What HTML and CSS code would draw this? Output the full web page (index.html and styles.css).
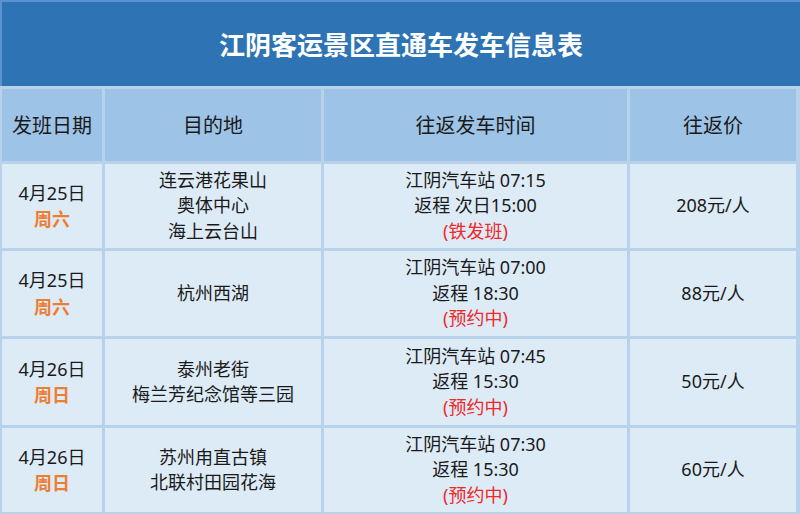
FILE: index.html
```html
<!DOCTYPE html>
<html lang="zh-CN">
<head>
<meta charset="utf-8">
<title>江阴客运景区直通车发车信息表</title>
<link rel="stylesheet" href="styles.css">
</head>
<body>
<div class="sheet">
  <div class="title">江阴客运景区直通车发车信息表</div>
  <div class="grid">
    <div class="cell head">发班日期</div>
    <div class="cell head">目的地</div>
    <div class="cell head">往返发车时间</div>
    <div class="cell head">往返价</div>

    <div class="cell"><span>4月25日</span><span class="wd">周六</span></div>
    <div class="cell"><span>连云港花果山</span><span>奥体中心</span><span>海上云台山</span></div>
    <div class="cell"><span>江阴汽车站 07:15</span><span>返程 次日15:00</span><span class="st">(铁发班)</span></div>
    <div class="cell">208元/人</div>

    <div class="cell"><span>4月25日</span><span class="wd">周六</span></div>
    <div class="cell">杭州西湖</div>
    <div class="cell"><span>江阴汽车站 07:00</span><span>返程 18:30</span><span class="st">(预约中)</span></div>
    <div class="cell">88元/人</div>

    <div class="cell"><span>4月26日</span><span class="wd">周日</span></div>
    <div class="cell"><span>泰州老街</span><span>梅兰芳纪念馆等三园</span></div>
    <div class="cell"><span>江阴汽车站 07:45</span><span>返程 15:30</span><span class="st">(预约中)</span></div>
    <div class="cell">50元/人</div>

    <div class="cell"><span>4月26日</span><span class="wd">周日</span></div>
    <div class="cell"><span>苏州甪直古镇</span><span>北联村田园花海</span></div>
    <div class="cell"><span>江阴汽车站 07:30</span><span>返程 15:30</span><span class="st">(预约中)</span></div>
    <div class="cell">60元/人</div>
  </div>
</div>
</body>
</html>
```

FILE: styles.css
```css
html, body {
  margin: 0;
  padding: 0;
  background: #ffffff;
}
.sheet {
  width: 800px;
  height: 514px;
  overflow: hidden;
  font-family: "Noto Sans", "Noto Sans CJK SC", sans-serif;
  color: #1a1a1a;
}
.title {
  box-sizing: border-box;
  height: 86px;
  border-top: 2px solid #5a93cf;
  border-left: 2px solid #5a93cf;
  background: #2e74b5;
  color: #ffffff;
  font-family: "Noto Sans CJK SC", sans-serif;
  font-weight: 700;
  font-size: 26px;
  display: flex;
  align-items: center;
  justify-content: center;
  padding-bottom: 2px;
}
.grid {
  display: grid;
  grid-template-columns: 100px 216px 303px 166px;
  grid-template-rows: 72px 84px 85px 86px 84px;
  gap: 3px;
  padding: 3px 4px 2px 2px;
  background: #b8d2ec;
}
.cell {
  background: #ddebf7;
  display: flex;
  flex-direction: column;
  align-items: center;
  justify-content: center;
  text-align: center;
  font-size: 18px;
  line-height: 25.5px;
}
.cell.head {
  background: #9dc3e6;
  font-size: 20px;
  font-family: "Noto Sans CJK SC", sans-serif;
}
.wd {
  color: #ed7d31;
  font-weight: 700;
  font-family: "Noto Sans CJK SC", sans-serif;
}
.st {
  color: #f02828;
}
```
